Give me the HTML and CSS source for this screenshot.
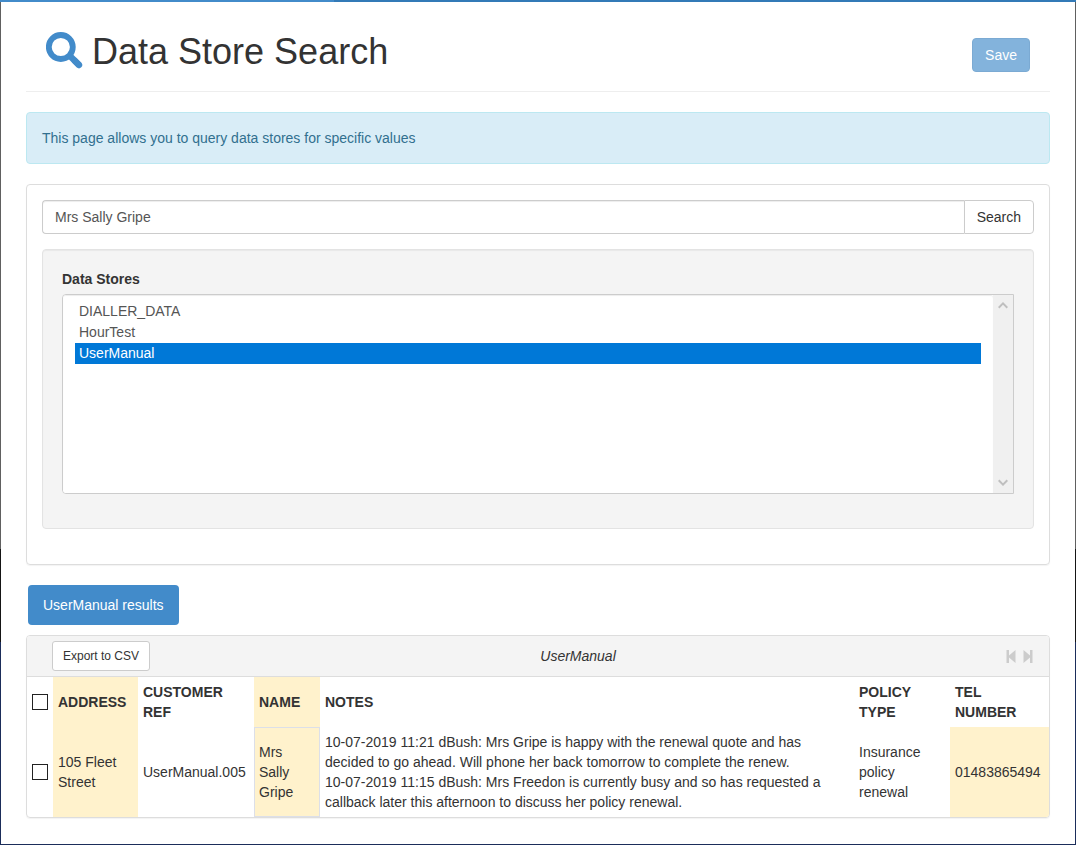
FILE: index.html
```html
<!DOCTYPE html>
<html lang="en">
<head>
<meta charset="utf-8">
<title>Data Store Search</title>
<link rel="stylesheet" href="styles.css">
</head>
<body>
<div class="frame">
<main class="page">
  <header class="page-header">
    <h1 class="page-title">
      <svg class="title-icon" viewBox="0 0 37 40" aria-hidden="true">
        <circle cx="14.8" cy="15" r="12" fill="none" stroke="currentColor" stroke-width="5.8"/>
        <path d="M22.5 22.5L33.5 33.5" stroke="currentColor" stroke-width="6.4"/>
        <path d="M29 29L33 33" stroke="currentColor" stroke-width="6.4" stroke-linecap="round"/>
      </svg>
      <span>Data Store Search</span>
    </h1>
    <button class="btn btn-save" type="button">Save</button>
  </header>

  <p class="notice">This page allows you to query data stores for specific values</p>

  <form class="panel search-panel">
    <div class="search-group">
      <input class="search-input" type="text" value="Mrs Sally Gripe" aria-label="Search value">
      <button class="btn btn-search" type="button">Search</button>
    </div>
    <div class="well">
      <label class="list-label" for="stores">Data Stores</label>
      <div class="list">
        <select class="list-select" id="stores" size="9">
          <option>DIALLER_DATA</option>
          <option>HourTest</option>
          <option selected>UserManual</option>
        </select>
        <div class="list-rail" aria-hidden="true">
          <svg class="rail-arrow" viewBox="0 0 10 8"><path d="M0.7 6.7L5 2.4L9.3 6.7" fill="none" stroke="currentColor" stroke-width="2"/></svg>
          <svg class="rail-arrow" viewBox="0 0 10 8"><path d="M0.7 1.3L5 5.6L9.3 1.3" fill="none" stroke="currentColor" stroke-width="2"/></svg>
        </div>
      </div>
    </div>
  </form>

  <nav class="tabs"><a class="tab" href="#results">UserManual results</a></nav>

  <section class="panel" id="results">
    <div class="results-bar">
      <button class="btn btn-export" type="button">Export to CSV</button>
      <em>UserManual</em>
      <div class="pager">
        <button class="pager-btn" type="button" aria-label="Previous page">
          <svg class="pager-icon" viewBox="0 0 10 13"><path d="M0.5 0H3V5.5L9.5 0V13L3 7.5V13H0.5Z" fill="currentColor"/></svg>
        </button>
        <button class="pager-btn" type="button" aria-label="Next page">
          <svg class="pager-icon" viewBox="0 0 10 13"><path d="M9.5 0H7V5.5L0.5 0V13L7 7.5V13H9.5Z" fill="currentColor"/></svg>
        </button>
      </div>
    </div>
    <table class="results">
      <colgroup>
        <col class="col-check"><col class="col-address"><col class="col-ref"><col class="col-name"><col><col class="col-policy"><col class="col-tel">
      </colgroup>
      <thead>
        <tr>
          <th><input class="check" type="checkbox" aria-label="Select all rows"></th>
          <th class="match">ADDRESS</th>
          <th>CUSTOMER REF</th>
          <th class="match">NAME</th>
          <th>NOTES</th>
          <th>POLICY TYPE</th>
          <th>TEL NUMBER</th>
        </tr>
      </thead>
      <tbody>
        <tr>
          <td><input class="check" type="checkbox" aria-label="Select row"></td>
          <td class="match">105 Fleet Street</td>
          <td>UserManual.005</td>
          <td class="match active">Mrs Sally Gripe</td>
          <td>10-07-2019 11:21 dBush: Mrs Gripe is happy with the renewal quote and has decided to go ahead. Will phone her back tomorrow to complete the renew.<br>10-07-2019 11:15 dBush: Mrs Freedon is currently busy and so has requested a callback later this afternoon to discuss her policy renewal.</td>
          <td>Insurance policy renewal</td>
          <td class="match">01483865494</td>
        </tr>
      </tbody>
    </table>
  </section>
</main>
</div>
</body>
</html>
```
FILE: styles.css
```css
* { box-sizing: border-box; }

body {
  margin: 0;
  background: #fff;
  color: #333;
  font: 14px/20px "Liberation Sans", Arial, sans-serif;
}

/* Edge of the window: blue on top, grey to navy down the sides */
.frame {
  padding: 2px 1px 1px;
  background:
    linear-gradient(90deg, #428bca 31%, #337ab7 31%) top / 100% 2px no-repeat,
    linear-gradient(#606060 65%, #151515 65%, #151515 76%, #1b2d5a 76%);
}

.page { padding: 30px 25px 26px; background: #fff; }

.page-header {
  display: flex;
  align-items: flex-end;
  justify-content: space-between;
  padding: 0 20px 19px;
  border-bottom: 1px solid #eee;
}

.page-title {
  display: flex;
  align-items: center;
  gap: 9px;
  margin: 0;
  font-size: 36px;
  font-weight: 400;
  line-height: 40px;
}

.title-icon { width: 37px; height: 40px; color: #428bca; }

.btn {
  border: 1px solid #ccc;
  border-radius: 4px;
  background: #fff;
  color: #333;
  font: inherit;
  padding: 6px 12px;
}

.btn-save { background: #428bca; border-color: #357ebd; color: #fff; opacity: 0.65; }

.notice {
  margin: 20px 0;
  padding: 15px;
  border: 1px solid #bce8f1;
  border-radius: 4px;
  background: #d9edf7;
  color: #31708f;
}

.panel {
  border: 1px solid #ddd;
  border-radius: 4px;
  box-shadow: 0 1px 1px rgba(0, 0, 0, 0.05);
  overflow: hidden;
}

.search-panel { padding: 15px 15px 35px; }

.search-group { display: flex; margin-bottom: 15px; }

.search-input {
  flex: 1;
  min-width: 0;
  height: 34px;
  padding: 6px 12px;
  border: 1px solid #ccc;
  border-right: 0;
  border-radius: 4px 0 0 4px;
  box-shadow: inset 0 1px 1px rgba(0, 0, 0, 0.075);
  color: #555;
  font: inherit;
}

.btn-search { border-radius: 0 4px 4px 0; }

.well {
  padding: 19px 19px 34px;
  border: 1px solid #e3e3e3;
  border-radius: 4px;
  background: #f4f4f4;
  box-shadow: inset 0 1px 1px rgba(0, 0, 0, 0.05);
}

.list-label { display: block; margin-bottom: 5px; font-weight: 700; }

.list {
  display: flex;
  height: 200px;
  border: 1px solid #ccc;
  border-radius: 4px 0 0 4px;
  background: #fff;
  overflow: hidden;
}

.list-select {
  flex: 1;
  min-width: 0;
  padding: 6px 12px;
  border: 0;
  outline: 0;
  background: #fff;
  box-shadow: inset 0 1px 1px rgba(0, 0, 0, 0.075);
  color: #555;
  font: inherit;
  overflow: hidden;
}

.list-select option { min-height: 21px; padding: 2px 4px 0; line-height: 19px; }

.list-select option:checked {
  background: linear-gradient(#0078d7, #0078d7);
  color: #fff;
  -webkit-text-fill-color: #fff;
}

.list-rail {
  display: flex;
  flex-direction: column;
  align-items: center;
  justify-content: space-between;
  width: 20px;
  padding: 6px 1px 6px 0;
  background: #f0f0f0;
  color: #bfbfbf;
}

.rail-arrow { width: 10px; height: 8px; }

.tabs { display: flex; margin: 20px 2px 10px; }

.tab {
  padding: 10px 15px;
  border-radius: 4px;
  background: #428bca;
  color: #fff;
  text-decoration: none;
}

.results-bar {
  display: flex;
  align-items: center;
  justify-content: space-between;
  padding: 5px 16px 5px 25px;
  border-bottom: 1px solid #ddd;
  background: #f4f4f4;
}

.btn-export { padding: 5px 10px; border-radius: 3px; font-size: 12px; line-height: 18px; }

.pager { display: flex; gap: 7px; }

.pager-btn { display: flex; padding: 0; border: 0; background: none; color: #ccc; }

.pager-icon { width: 10px; height: 13px; }

.results { width: 100%; table-layout: fixed; border-collapse: collapse; }

.results th,
.results td { padding: 5px; text-align: left; vertical-align: middle; }

.col-check { width: 26px; }
.col-address { width: 85px; }
.col-ref { width: 116px; }
.col-name { width: 66px; }
.col-policy { width: 96px; }
.col-tel { width: 99px; }

.results .match { background: #fff2cc; }

.results .active { outline: 1px solid #dcdfe8; outline-offset: -1px; }

.check {
  display: block;
  appearance: none;
  width: 16px;
  height: 16px;
  margin: 0;
  border: 1px solid #222;
  background: #fff;
}
```
